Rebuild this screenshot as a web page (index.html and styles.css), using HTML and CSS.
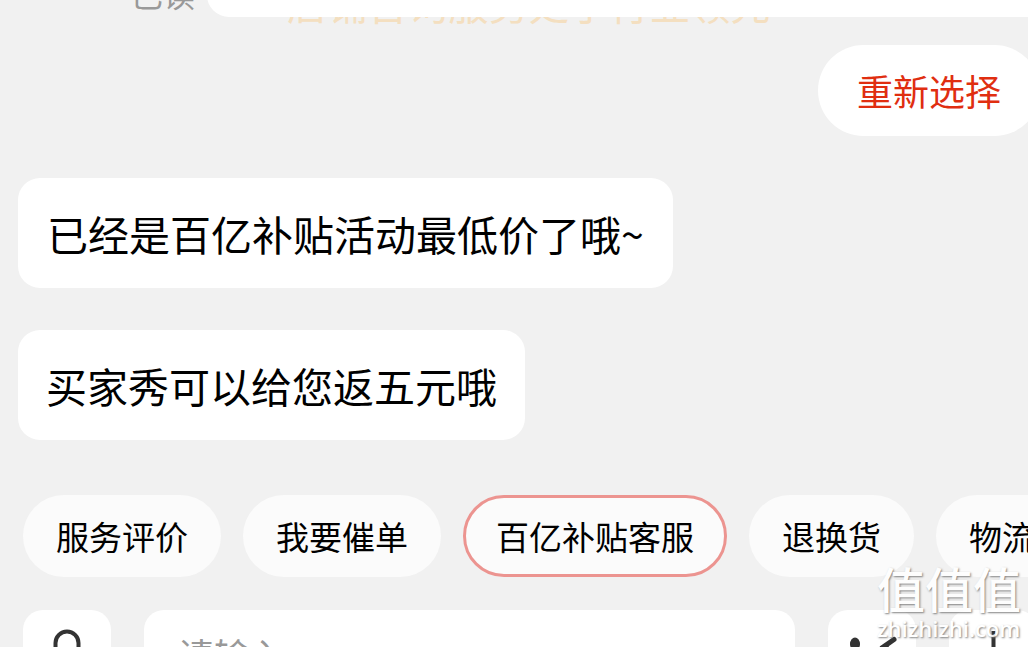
FILE: index.html
```html
<!DOCTYPE html>
<html lang="zh-CN">
<head>
    <meta charset="UTF-8">
    <meta name="viewport" content="width=device-width, initial-scale=1.0">
    <title>客服聊天</title>
    <link rel="stylesheet" href="styles.css">
</head>
<body>

<div class="chat">
    <!-- 上一条消息 -->
    <div class="last-message">
        <span class="banner-text">店铺咨询服务处于行业领先</span>
        <span class="read-state">已读</span>
        <div class="last-bubble"></div>
    </div>

    <div class="reselect-row">
        <button class="reselect">重新选择</button>
    </div>

    <!-- 客服消息 -->
    <div class="messages">
        <div class="message">已经是百亿补贴活动最低价了哦~</div>
        <div class="message">买家秀可以给您返五元哦</div>
    </div>

    <!-- 快捷入口 -->
    <div class="chips">
        <button class="chip">服务评价</button>
        <button class="chip">我要催单</button>
        <button class="chip active">百亿补贴客服</button>
        <button class="chip">退换货</button>
        <button class="chip">物流查询</button>
    </div>

    <!-- 输入栏 -->
    <div class="input-bar">
        <button class="tool">
            <svg width="88" height="88" viewBox="0 0 88 88" fill="none" stroke="#333" stroke-width="4" stroke-linecap="round">
                <rect x="32.500" y="21.500" width="23" height="32" rx="11.500"/>
                <path d="M25 43v2a19 19 0 0 0 38 0v-2M44 64v8"/>
            </svg>
        </button>
        <div class="input">请输入</div>
        <button class="tool">
            <svg width="88" height="88" viewBox="0 0 88 88" fill="none" stroke="#333" stroke-width="5" stroke-linecap="round">
                <ellipse cx="27" cy="34" rx="5" ry="6.5" fill="#333" stroke="none"/>
                <path d="M66 29.500L56 36.500L66 43M25 55a21 21 0 0 0 38 0"/>
            </svg>
        </button>
        <button class="tool">
            <svg width="88" height="88" viewBox="0 0 88 88" fill="none" stroke="#333" stroke-width="4">
                <path d="M44.500 21v46M21.500 44h46"/>
            </svg>
        </button>
    </div>
</div>

<div class="watermark">
    <div class="watermark-name">值值值</div>
    <div class="watermark-site">zhizhizhi.com</div>
</div>

</body>
</html>
```

FILE: styles.css
```css
body {
    font-family: "Noto Sans CJK SC", sans-serif;
    margin: 0;
    background-color: #f1f1f1;
    overflow: hidden;
}
button {
    font-family: inherit;
    border: none;
    padding: 0;
    flex-shrink: 0;
}
.chat {
    position: relative;
    width: 1028px;
    height: 647px;
    overflow: hidden;
}
.last-message {
    display: flex;
    align-items: flex-end;
    height: 17px;
}
.banner-text {
    position: absolute;
    left: 287px;
    top: -22px;
    font-size: 40.3px;
    line-height: 50px;
    color: #f4dfc0;
    white-space: nowrap;
}
.read-state {
    width: 76px;
    margin-left: 131px;
    padding-bottom: 4px;
    font-size: 32px;
    line-height: 40px;
    color: #999;
}
.last-bubble {
    position: relative;
    flex: 1;
    height: 60px;
    background-color: #fff;
    border-bottom-left-radius: 22px;
}
.reselect-row {
    display: flex;
    justify-content: flex-end;
    margin: 28px -12px 0 0;
}
.reselect {
    width: 222px;
    height: 91px;
    padding-bottom: 2px;
    border-radius: 46px;
    background-color: #fff;
    color: #e02e10;
    font-size: 36px;
}
.messages {
    display: flex;
    flex-direction: column;
    align-items: flex-start;
    gap: 42px;
    padding: 42px 18px 0;
}
.message {
    padding: 0 28px;
    height: 110px;
    line-height: 111px;
    border-radius: 22px;
    background-color: #fff;
    color: #000;
    font-size: 41px;
    white-space: nowrap;
}
.message:first-child {
    padding: 0 29px;
}
.chips {
    display: flex;
    gap: 22px;
    padding: 55px 0 0 23px;
}
.chip {
    height: 82px;
    padding: 0 33px;
    border-radius: 41px;
    background-color: #fbfbfb;
    color: #000;
    font-size: 33px;
    white-space: nowrap;
}
.chip.active {
    padding: 0 30px;
    border: 3px solid #ec9490;
}
.input-bar {
    display: flex;
    gap: 33px;
    padding: 33px 0 0 23px;
}
.tool {
    width: 88px;
    height: 88px;
    border-radius: 20px;
    background-color: #fff;
}
.tool svg {
    display: block;
}
.input {
    flex-shrink: 0;
    box-sizing: border-box;
    width: 651px;
    height: 88px;
    padding-left: 34px;
    border-radius: 20px;
    background-color: #fff;
    color: #999;
    font-size: 36px;
    line-height: 88px;
}
.watermark {
    position: absolute;
    left: 877px;
    top: 563px;
    color: #fff;
    text-shadow: 1px 1px 2px #777;
    opacity: 0.9;
}
.watermark-name {
    font-size: 48px;
    line-height: 48px;
    font-weight: 500;
}
.watermark-site {
    margin-top: 5px;
    font-family: "Open Sans", sans-serif;
    font-size: 22px;
    line-height: 24px;
    font-weight: 600;
}
```
